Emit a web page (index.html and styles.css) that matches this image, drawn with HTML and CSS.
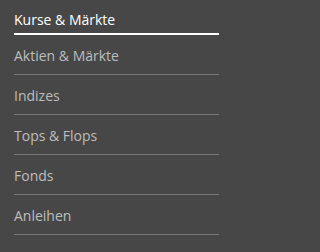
FILE: index.html
```html
<!DOCTYPE html>
<html lang="de">
<head>
<meta charset="utf-8">
<link rel="stylesheet" href="styles.css">
</head>
<body>
<nav class="menu">
  <a class="item active" href="#">Kurse &amp; Märkte</a>
  <a class="item" href="#">Aktien &amp; Märkte</a>
  <a class="item" href="#">Indizes</a>
  <a class="item" href="#">Tops &amp; Flops</a>
  <a class="item" href="#">Fonds</a>
  <a class="item" href="#">Anleihen</a>
</nav>
</body>
</html>
```
FILE: styles.css
```css
html, body {
  margin: 0;
  padding: 0;
  background: #474747;
}
body {
  width: 225px;
  height: 252px;
  overflow: hidden;
}
.menu {
  display: flex;
  flex-direction: column;
  padding: 0 6px 0 14px;
}
.item {
  display: block;
  height: 40px;
  box-sizing: border-box;
  padding-top: 12px;
  font-family: "Open Sans", "Liberation Sans", sans-serif;
  font-size: 14px;
  line-height: 18px;
  color: #bdbdbd;
  text-decoration: none;
  border-bottom: 1px solid #777777;
}
.item:first-child {
  height: 35px;
  padding-top: 11px;
}
.item.active {
  color: #ffffff;
  border-bottom: 2px solid #ffffff;
}
```
